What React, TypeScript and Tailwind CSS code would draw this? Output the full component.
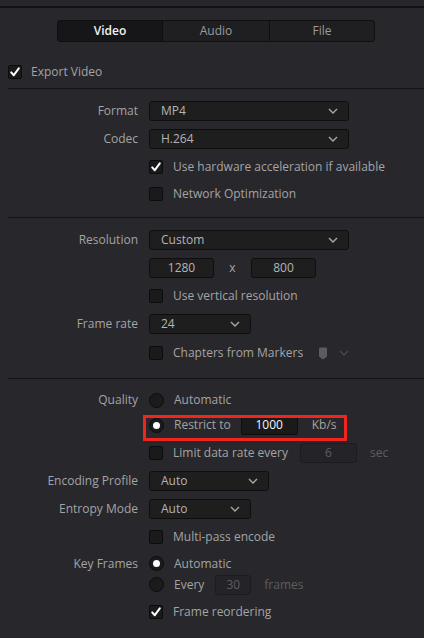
import React from "react";

const font = { fontFamily: '"Open Sans", "Noto Sans", sans-serif' };

function Chevron({ color = "#a8a8a8" }: { color?: string }) {
  return (
    <svg width="10" height="6" viewBox="0 0 10 6" fill="none">
      <path d="M1 1 L5 5 L9 1" stroke={color} strokeWidth="1.4" />
    </svg>
  );
}

function Check() {
  return (
    <svg width="12" height="12" viewBox="0 0 12 12" fill="none">
      <path d="M2.2 6.4 L4.8 9.2 L9.8 2.4" stroke="#ffffff" strokeWidth="2" strokeLinecap="round" strokeLinejoin="round" />
    </svg>
  );
}

function Checkbox({ checked }: { checked?: boolean }) {
  return (
    <div className="w-[14px] h-[14px] shrink-0 rounded-[2px] bg-[#1a1a1b] border border-[#0c0c0c] flex items-center justify-center">
      {checked && <Check />}
    </div>
  );
}

function Radio({ on }: { on?: boolean }) {
  return (
    <div className="w-[15px] h-[15px] shrink-0 rounded-full bg-[#1b1b1c] border border-[#0c0c0c] flex items-center justify-center">
      {on && <div className="w-[7px] h-[7px] rounded-full bg-white" />}
    </div>
  );
}

function Dropdown({ value, w, chevronRight = 11 }: { value: string; w: string; chevronRight?: number }) {
  return (
    <div className={`${w} h-[20px] rounded-[3px] bg-[#1e1e1f] border border-[#0e0e0e] flex items-center pl-[11px] pr-[10px] justify-between`}>
      <span className="text-[12px] text-[#b4b4b4]">{value}</span>
      <Chevron />
    </div>
  );
}

function Row({ label, h, children, className = "" }: { label?: string; h: string; children?: React.ReactNode; className?: string }) {
  return (
    <div className={`flex items-center ${h} ${className}`}>
      <div className="w-[139px] shrink-0 text-right text-[12px] text-[#a4a4a4] pr-[1px]">{label}</div>
      <div className="ml-[10px] flex items-center flex-1">{children}</div>
    </div>
  );
}

function CheckLabel({ checked, text }: { checked?: boolean; text: string }) {
  return (
    <div className="flex items-center">
      <Checkbox checked={checked} />
      <span className="ml-[10px] text-[12px] text-[#a4a4a4]">{text}</span>
    </div>
  );
}

function Separator() {
  return <div className="ml-[8px] h-[1px] bg-[#141415]" />;
}

export default function App() {
  return (
    <div style={font} className="w-[424px] h-[638px] bg-[#28272c] overflow-hidden">
      <div className="h-[6px]" />
      <div className="h-[2px] bg-[#121213]" />
      {/* Tabs */}
      <div className="mt-[12px] ml-[57px] w-[318px] h-[22px] rounded-[3px] bg-[#1f1f22] border border-[#0f0f10] flex text-[12px]">
        <div className="w-[105px] bg-[#161618] rounded-l-[2px] flex items-center justify-center text-[#f2f2f2] font-semibold border-r border-[#0f0f10]">Video</div>
        <div className="w-[107px] flex items-center justify-center text-[#9a9a9a] border-r border-[#0f0f10]">Audio</div>
        <div className="flex-1 flex items-center justify-center text-[#9a9a9a]">File</div>
      </div>
      {/* Export video */}
      <div className="mt-[16px] h-[28px] flex items-center ml-[8px]">
        <Checkbox checked />
        <span className="ml-[9px] text-[12px] text-[#a4a4a4]">Export Video</span>
      </div>
      <div className="mt-[2px]" />
      <Separator />

      {/* Section 1 */}
      <div className="pt-[8px]">
        <Row label="Format" h="h-[28px]"><Dropdown value="MP4" w="w-[200px]" /></Row>
        <Row label="Codec" h="h-[28px]"><Dropdown value="H.264" w="w-[200px]" /></Row>
        <Row h="h-[27px]"><CheckLabel checked text="Use hardware acceleration if available" /></Row>
        <Row h="h-[28px]"><CheckLabel text="Network Optimization" /></Row>
      </div>
      <div className="mt-[9px]" />
      <Separator />

      {/* Section 2 */}
      <div className="pt-[8px]">
        <Row label="Resolution" h="h-[28px]"><Dropdown value="Custom" w="w-[200px]" /></Row>
        <Row h="h-[28px]">
          <div className="w-[65px] h-[20px] rounded-[3px] bg-[#1e1e1f] border border-[#0e0e0e] flex items-center justify-center text-[12px] text-[#b4b4b4]">1280</div>
          <span className="w-[37px] text-center text-[12px] text-[#a4a4a4]">x</span>
          <div className="w-[65px] h-[20px] rounded-[3px] bg-[#1e1e1f] border border-[#0e0e0e] flex items-center justify-center text-[12px] text-[#b4b4b4]">800</div>
        </Row>
        <Row h="h-[28px]"><CheckLabel text="Use vertical resolution" /></Row>
        <Row label="Frame rate" h="h-[28px]"><Dropdown value="24" w="w-[102px]" /></Row>
        <Row h="h-[29px]" className="pt-[1px]">
          <CheckLabel text="Chapters from Markers" />
          <svg className="ml-[15px]" width="10" height="13" viewBox="0 0 10 13">
            <path d="M1 1.5 Q1 0.5 2 0.5 L8 0.5 Q9 0.5 9 1.5 L9 9.5 L5 12.5 L1 9.5 Z" fill="#5c5b60" />
          </svg>
          <div className="ml-[11px]"><Chevron color="#4a494e" /></div>
        </Row>
      </div>
      <div className="mt-[11px]" />
      <Separator />

      {/* Section 3 */}
      <div className="pt-[9px]">
        <Row label="Quality" h="h-[24px]">
          <Radio />
          <span className="ml-[10px] text-[12px] text-[#a4a4a4]">Automatic</span>
        </Row>
        <Row h="h-[26px]">
          <div className="relative flex items-center h-full">
            <div className="absolute left-[-6px] top-[0px] w-[204px] h-[26px] border-[3px] border-[#f0251e] pointer-events-none" />
            <Radio on />
            <span className="ml-[10px] text-[12px] text-[#a4a4a4]">Restrict to</span>
            <div className="ml-[10px] w-[57px] h-[20px] bg-[#1a1a1b] border border-[#0e0e0e] rounded-[2px] flex items-center justify-center text-[12px] text-[#f4f4f4]">1000</div>
            <span className="ml-[14px] text-[12px] text-[#a4a4a4]">Kb/s</span>
          </div>
        </Row>
        <Row h="h-[28px]" className="mt-[1px]">
          <CheckLabel text="Limit data rate every" />
          <div className="ml-[12px] w-[57px] h-[20px] rounded-[3px] bg-[#242328] border border-[#1c1b1f] flex items-center justify-center text-[12px] text-[#5e5d62]">6</div>
          <span className="ml-[13px] text-[12px] text-[#5e5d62]">sec</span>
        </Row>
        <Row label="Encoding Profile" h="h-[28px]"><Dropdown value="Auto" w="w-[120px]" /></Row>
        <Row label="Entropy Mode" h="h-[28px]"><Dropdown value="Auto" w="w-[102px]" /></Row>
        <Row h="h-[27px]"><CheckLabel text="Multi-pass encode" /></Row>
        <Row label="Key Frames" h="h-[25px]" className="mt-[1px]">
          <Radio on />
          <span className="ml-[10px] text-[12px] text-[#a4a4a4]">Automatic</span>
        </Row>
        <Row h="h-[17px]">
          <Radio />
          <span className="ml-[10px] text-[12px] text-[#a4a4a4]">Every</span>
          <div className="ml-[11px] w-[36px] h-[20px] rounded-[3px] bg-[#242328] border border-[#1c1b1f] flex items-center justify-center text-[12px] text-[#5e5d62]">30</div>
          <span className="ml-[13px] text-[12px] text-[#5e5d62]">frames</span>
        </Row>
        <Row h="h-[28px]" className="mt-[5px]"><CheckLabel checked text="Frame reordering" /></Row>
      </div>
    </div>
  );
}
